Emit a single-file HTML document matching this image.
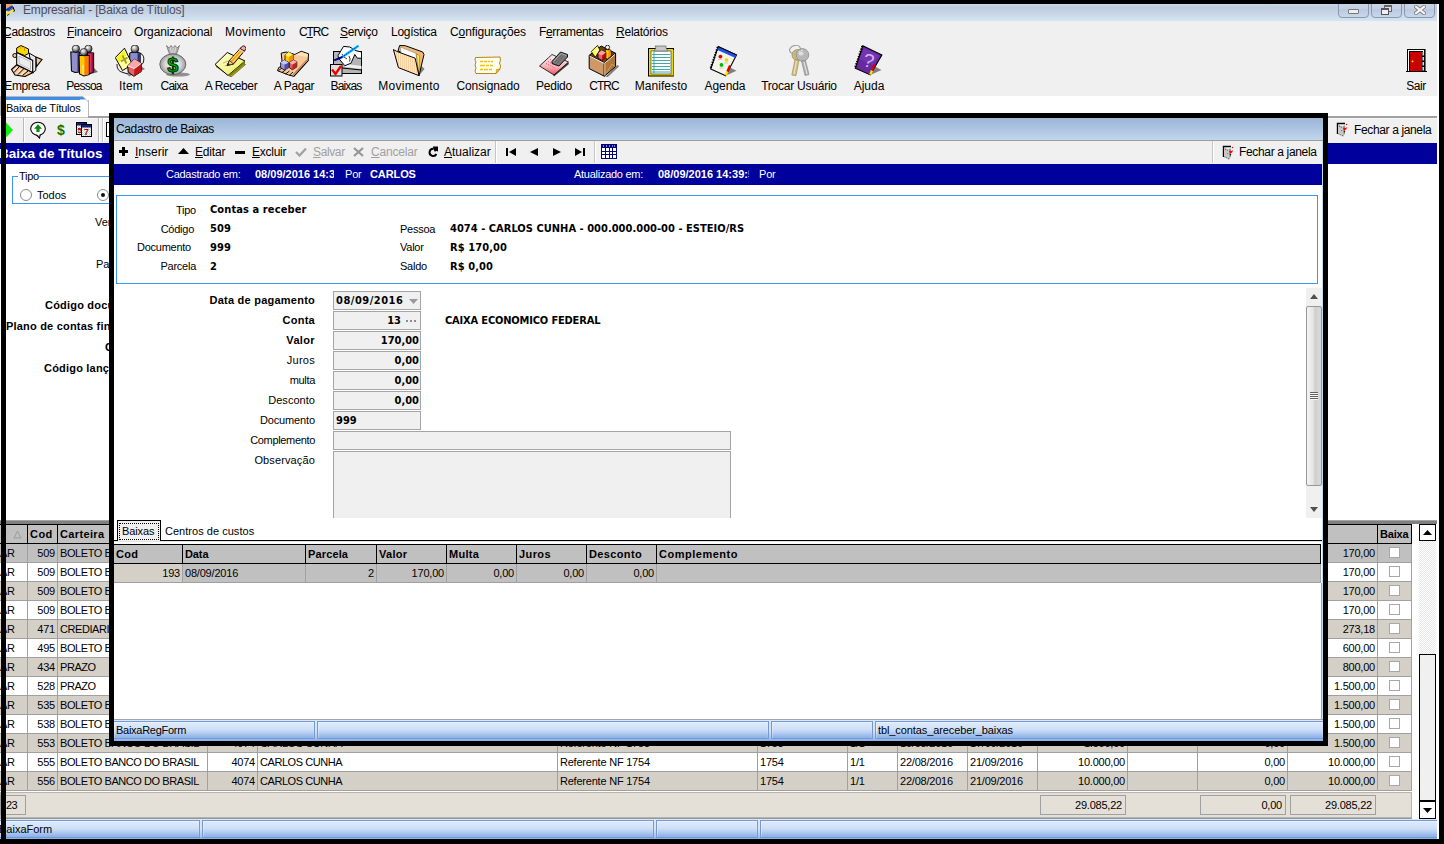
<!DOCTYPE html>
<html lang="pt-BR"><head><meta charset="utf-8"><title>Empresarial - [Baixa de Títulos]</title>
<style>
html,body{margin:0;padding:0;}
body{width:1444px;height:844px;overflow:hidden;background:#000;position:relative;font-family:"Liberation Sans",sans-serif;font-size:11px;color:#000;}
div,span{box-sizing:border-box;}
.a{position:absolute;}
.t{position:absolute;white-space:nowrap;line-height:14px;}
.seg{font-family:"Liberation Sans",sans-serif;font-size:12px;}
.b{font-weight:bold;}
.r{text-align:right;}
u{text-decoration:underline;text-underline-offset:1px;}
#main{position:absolute;left:0;top:0;width:1444px;height:844px;background:#fff;overflow:hidden;}
.blk{position:absolute;background:#000;}
#title{left:0;top:4px;width:1437px;height:17px;background:linear-gradient(#cad7e6 0,#bdccdd 18%,#c4d2e3 45%,#d7e4f2 100%);}
#menubar{left:0;top:21px;width:1437px;height:21px;background:#f0f0f0;}
#toolbar{left:0;top:42px;width:1437px;height:54px;background:#f0f0f0;}
.wb{position:absolute;top:0px;height:18px;border:1px solid #8b97b5;border-radius:0 0 4px 4px;background:linear-gradient(#ccd9e9,#c2d0e3 50%,#b9c9de 50%,#c9d7e9);}
.bluebar{background:#00009c;}
.grow{position:absolute;left:0;height:19px;width:1406px;}
.gc{position:absolute;top:0;height:19px;border-right:1px solid #a0a0a0;border-bottom:1px solid #a0a0a0;line-height:18px;white-space:nowrap;overflow:hidden;font-size:11px;}
.gh{position:absolute;top:0;height:19px;border:1px solid #000;border-left:none;background:#c0c0c0;line-height:18px;font-weight:bold;font-size:11px;white-space:nowrap;overflow:hidden;padding-left:2px;}
.sb{position:absolute;height:20px;background:linear-gradient(#d9e7fb 0,#d4e3fa 50%,#a9c6f0 85%,#86afe9 100%);}
.sbs{position:absolute;height:18px;border:1px solid #7499d3;background:linear-gradient(#dfebfc 0,#cfe0f8 45%,#bdd3f4 62%,#9dbcec 85%,#8db1e7 100%);box-shadow:inset 1px 1px 0 rgba(255,255,255,.3),inset -1px 0 0 rgba(255,255,255,.12);}
.fbox{position:absolute;height:20px;border:1px solid #a0a0a0;background:#e4e0d8;line-height:18px;text-align:right;padding-right:3px;font-size:11px;}
.fld{position:absolute;height:19px;border:1px solid #a5a5a5;background:#f0f0f0;font-family:"DejaVu Sans Condensed","DejaVu Sans","Liberation Sans",sans-serif;font-weight:bold;font-size:11px;line-height:17px;white-space:nowrap;}
.lbl{position:absolute;white-space:nowrap;font-size:11px;line-height:14px;text-align:right;}
.vb{font-family:"DejaVu Sans Condensed","DejaVu Sans","Liberation Sans",sans-serif;font-weight:bold;font-size:11px;}

#ttl{letter-spacing:-0.178px !important}
#mn1{letter-spacing:-0.135px !important}
#mn2{letter-spacing:-0.125px !important}
#mn3{letter-spacing:0.224px !important}
#mn4{letter-spacing:-1.09px !important}
#mn5{letter-spacing:-0.362px !important}
#mn6{letter-spacing:-0.259px !important}
#mn7{letter-spacing:-0.108px !important}
#mn8{letter-spacing:-0.342px !important}
#mn9{letter-spacing:-0.233px !important}
#tl1{letter-spacing:-0.755px !important}
#tl2{letter-spacing:0.114px !important}
#tl3{letter-spacing:-0.738px !important}
#tl4{letter-spacing:-0.394px !important}
#tl5{letter-spacing:-0.315px !important}
#tl6{letter-spacing:-0.839px !important}
#tl7{letter-spacing:0.335px !important}
#tl8{letter-spacing:-0.086px !important}
#tl9{letter-spacing:-0.196px !important}
#tl10{letter-spacing:-1.007px !important}
#tl11{letter-spacing:0.052px !important}
#tl12{letter-spacing:-0.096px !important}
#tl13{letter-spacing:-0.237px !important}
#tl14{letter-spacing:-0.001px !important}
#tl15{letter-spacing:-0.461px !important}
#fj1{letter-spacing:-0.361px !important}
#fj2{letter-spacing:-0.341px !important}
#dh0{letter-spacing:0.27px !important}
#dh1{letter-spacing:-0.111px !important}
#dh2{letter-spacing:0.135px !important}
#dh3{letter-spacing:0.299px !important}
#dh4{letter-spacing:0.273px !important}
#dh5{letter-spacing:0.406px !important}
#dh6{letter-spacing:0.359px !important}
#dh7{letter-spacing:0.514px !important}
#gh1{letter-spacing:0.436px !important}
#gh2{letter-spacing:0.365px !important}
#gh14{letter-spacing:-0.172px !important}
#db0{letter-spacing:-0.008px !important}
#db1{letter-spacing:-0.177px !important}
#db2{letter-spacing:-0.262px !important}
#db3{letter-spacing:-0.372px !important}
#db4{letter-spacing:-0.191px !important}
#db5{letter-spacing:0.011px !important}
#dttl{letter-spacing:-0.374px !important}
#fl0{letter-spacing:0.237px !important}
#fl1{letter-spacing:0.266px !important}
#fl2{letter-spacing:0.359px !important}
#fl3{letter-spacing:0.259px !important}
#fl4{letter-spacing:-0.321px !important}
#fl5{letter-spacing:0.039px !important}
#fl6{letter-spacing:-0.13px !important}
#fl7{letter-spacing:-0.335px !important}
#fl8{letter-spacing:0.129px !important}
#mn0{letter-spacing:-0.3px !important}
#tl0{letter-spacing:-0.376px !important}

</style></head>
<body>
<div id="main">
<div class="a" id="title"></div>
<svg class="a" style="left:0px;top:3px" width="16" height="14" viewBox="0 0 16 14"><path d="M0 7 L3 5.500 L3 9Z" fill="#e8e000"/><path d="M6 1 L12 1 L13 3 L8 6 L6 5Z" fill="#f0a868"/><path d="M6 6 L12 2.500 L13.300 4 L8.500 8 L6 7.500Z" fill="#0838e0"/><path d="M8.500 8 L13.300 4.500 L13.800 5.500 L9 9Z" fill="#804010"/><path d="M6 8 L8 9 L13 6 L14.300 8 L9 11.500 L7 12.500 L6 11.500Z" fill="#f0e850"/><path d="M13 4 L14.500 8 L13.500 8.500" fill="none" stroke="#000" stroke-width="1"/><path d="M7 12.500 L9.500 11" stroke="#000" stroke-width=".8"/></svg>
<div class="t seg" style="left:23px;top:2px;font-size:12px;color:#4e4e5e;line-height:16px" id="ttl">Empresarial - [Baixa de Títulos]</div>
<div class="wb" style="left:1338px;width:31px"><div class="a" style="left:9px;top:8px;width:11px;height:5px;border:1px solid #777;border-radius:1px;background:#eee"></div></div>
<div class="wb" style="left:1371px;width:31px"><div class="a" style="left:12px;top:4px;width:8px;height:7px;border:1px solid #666;border-top-width:2px;background:#dde"></div><div class="a" style="left:9px;top:7px;width:8px;height:7px;border:1px solid #555;border-top-width:2px;background:#eef"></div></div>
<div class="wb" style="left:1404px;width:31px"><svg class="a" style="left:9px;top:4px" width="12" height="10" viewBox="0 0 12 10"><path d="M2 1.800 L10 8.200 M10 1.800 L2 8.200" stroke="#777" stroke-width="3.800" stroke-linecap="square"/><path d="M2 1.800 L10 8.200 M10 1.800 L2 8.200" stroke="#f4f4f4" stroke-width="2.200" stroke-linecap="square"/></svg></div>
<div class="a" id="menubar"></div>
<div class="t seg mn" id="mn0" style="left:3px;top:24px;line-height:16px"><u>C</u>adastros</div>
<div class="t seg mn" id="mn1" style="left:67px;top:24px;line-height:16px"><u>F</u>inanceiro</div>
<div class="t seg mn" id="mn2" style="left:134px;top:24px;line-height:16px">Organizacional</div>
<div class="t seg mn" id="mn3" style="left:225px;top:24px;line-height:16px">Movimento</div>
<div class="t seg mn" id="mn4" style="left:299px;top:24px;line-height:16px">C<u>T</u>RC</div>
<div class="t seg mn" id="mn5" style="left:340px;top:24px;line-height:16px"><u>S</u>erviço</div>
<div class="t seg mn" id="mn6" style="left:391px;top:24px;line-height:16px">Logística</div>
<div class="t seg mn" id="mn7" style="left:450px;top:24px;line-height:16px">C<u>o</u>nfigurações</div>
<div class="t seg mn" id="mn8" style="left:539px;top:24px;line-height:16px">F<u>e</u>rramentas</div>
<div class="t seg mn" id="mn9" style="left:616px;top:24px;line-height:16px"><u>R</u>elatórios</div>
<div class="a" id="toolbar"></div>
<svg class="a" style="left:11px;top:45px" width="32" height="32" viewBox="0 0 32 32">
<path d="M0.500 24.500 L5.500 20 L22 27.500 L14 31.500 L4 30Z" fill="#f8c898" stroke="#000" stroke-width="1.1"/>
<path d="M3 27.500 L8 22 M7 29.500 L12.500 24 M11.500 30.500 L17 26" stroke="#000" stroke-width="1"/>
<path d="M2.500 26 L6.500 22 M6 28.500 L10.500 24 M10 30 L15 25.500" stroke="#fff" stroke-width=".8"/>
<path d="M24.800 12 L31 14.500 L25.500 21.500Z" fill="#f8c898" stroke="#000" stroke-width="1.1"/>
<circle cx="3.800" cy="10.500" r="2" fill="#f8c898" stroke="#000"/>
<path d="M18 8 L24.800 12 L24.800 25.500 L21.700 27.500Z" fill="#e8e8e8" stroke="#000" stroke-width="1"/>
<path d="M5.700 3 L9.900 0.500 L17.500 4 L17.500 8.500 L13.700 10.500 L5.700 7.500Z" fill="#ffd800" stroke="#000" stroke-width="1"/>
<path d="M9.900 0.500 L9.900 4 M13.500 2.200 L13.500 6" stroke="#c09000" stroke-width=".8"/>
<path d="M5.700 7.400 L21.700 15.400 L21.700 27.500 L5.700 19.500Z" fill="#fff" stroke="#000" stroke-width="1.1"/>
<path d="M8 11 L19.500 16.500 L19.500 24.500 L8 18.500Z" fill="#ececec" stroke="#aaa" stroke-width=".8"/>
</svg>
<div class="t seg tl" id="tl0" style="left:-33px;width:120px;text-align:center;top:78px;line-height:16px">Empresa</div>
<svg class="a" style="left:70px;top:45px" width="32" height="32" viewBox="0 0 32 32">
<defs><radialGradient id="hd" cx=".38" cy=".32" r=".7"><stop offset="0" stop-color="#fff"/><stop offset=".45" stop-color="#aaa"/><stop offset="1" stop-color="#222"/></radialGradient></defs>
<path d="M14 31 L28 27 L24 23 L16 26Z" fill="#707070"/>
<path d="M0.800 7 L9.500 7 L9.500 27 L5 27.500 L1.500 26Z" fill="#9090d0" stroke="#000" stroke-width="1.1"/>
<path d="M7.500 8 L9.500 8 L9.500 27 L7.500 27Z" fill="#303070"/>
<path d="M17.500 7.500 L23.600 8 L23.600 27 L19 29 L17.500 28Z" fill="#d83070" stroke="#000" stroke-width="1.1"/>
<path d="M21.500 8.500 L23.300 8.500 L23.300 27 L21.500 28Z" fill="#901040"/>
<path d="M9 10.500 L19 10.500 L19 29.500 L14 31 L9.500 29Z" fill="#ffc800" stroke="#000" stroke-width="1.1"/>
<path d="M14.500 11 L18.600 11 L18.600 29.500 L14.500 30.500Z" fill="#ff7800"/>
<path d="M13 20 L13 30" stroke="#fff" stroke-width=".7"/>
<circle cx="5.900" cy="3.800" r="3.700" fill="url(#hd)" stroke="#000" stroke-width=".6"/>
<circle cx="18.400" cy="3.800" r="3.700" fill="url(#hd)" stroke="#000" stroke-width=".6"/>
<circle cx="13.800" cy="7.200" r="3.700" fill="url(#hd)" stroke="#000" stroke-width=".6"/>
</svg>
<div class="t seg tl" id="tl1" style="left:24px;width:120px;text-align:center;top:78px;line-height:16px">Pessoa</div>
<svg class="a" style="left:115px;top:45px" width="32" height="32" viewBox="0 0 32 32">
<defs><radialGradient id="hd2" cx=".38" cy=".32" r=".7"><stop offset="0" stop-color="#fff"/><stop offset=".45" stop-color="#aaa"/><stop offset="1" stop-color="#222"/></radialGradient></defs>
<path d="M14 31.500 L30 24 L26 21 L12 28Z" fill="#808080"/>
<path d="M14.700 8 Q20 5.500 25.200 8 L25.200 18 L14.700 18Z" fill="#8c8cd0" stroke="#000" stroke-width="1"/>
<path d="M22.500 8 L25 8.500 L25 18 L22.500 18Z" fill="#303078"/>
<circle cx="19.900" cy="3.900" r="3.900" fill="url(#hd2)" stroke="#000" stroke-width=".6"/>
<path d="M25 8 Q30 10 28.500 17 Q28 19 26 19.500" fill="none" stroke="#000" stroke-width=".9"/>
<path d="M0.300 12.600 L9.500 3.200 L17.300 19.300 L7.500 25.600 Z" fill="#ffffa0" stroke="#000" stroke-width="1"/>
<path d="M1.500 13 L9 5 L11 10 L4 18Z" fill="#f0f000" opacity=".8"/>
<path d="M7.500 10.500 l4 8 M6 16.500 l6.500 -4" stroke="#a09828" stroke-width="1.700"/>
<path d="M2 19 Q1.500 26 8 27.500 L13 29" fill="none" stroke="#000" stroke-width=".9"/>
<path d="M12.700 20.900 L19.400 14.100 L26.200 18.300 L26.200 26.600 L18.900 31.300 L13.200 27.100Z" fill="#e86060" stroke="#000" stroke-width="1"/>
<path d="M12.700 20.900 L19.400 14.100 L26.200 18.300 L19.500 23.500Z" fill="#f8a8a8"/>
<path d="M19.500 23.500 L26.200 18.300 L26.200 26.600 L18.900 31.300Z" fill="#c01818"/>
<path d="M13 21 L19.500 23.500 L26 18.500" fill="none" stroke="#fff" stroke-width=".9"/>
</svg>
<div class="t seg tl" id="tl2" style="left:71px;width:120px;text-align:center;top:78px;line-height:16px">Item</div>
<svg class="a" style="left:159px;top:45px" width="32" height="32" viewBox="0 0 32 32">
<defs><radialGradient id="bg1" cx=".5" cy=".5" r=".55"><stop offset="0" stop-color="#fff"/><stop offset=".55" stop-color="#d8d8d8"/><stop offset="1" stop-color="#8c8c8c"/></radialGradient></defs>
<ellipse cx="19" cy="29.500" rx="12" ry="2" fill="#909090"/>
<path d="M7.500 0.500 L10 3 L12 0.500 L14 3 L16 0.500 L18 3 L20.500 0.500 L17.500 9 L10.500 9Z" fill="#b0b0b0" stroke="#707070" stroke-width=".8"/>
<path d="M11 2 L12.500 8 M14 2 L14 8 M17 2 L15.500 8" stroke="#e8e8e8" stroke-width=".8"/>
<ellipse cx="13.800" cy="19.300" rx="13" ry="10.400" fill="url(#bg1)" stroke="#606060" stroke-width=".9"/>
<text x="13.800" y="26.500" font-family="Liberation Sans,sans-serif" font-weight="bold" font-size="20" fill="#00b000" stroke="#003000" stroke-width="1" text-anchor="middle">$</text>
</svg>
<div class="t seg tl" id="tl3" style="left:114px;width:120px;text-align:center;top:78px;line-height:16px">Caixa</div>
<svg class="a" style="left:214px;top:45px" width="32" height="32" viewBox="0 0 32 32">
<defs><linearGradient id="pp" x1="0" y1="0" x2="1" y2="1"><stop offset="0" stop-color="#ffffd8"/><stop offset=".6" stop-color="#f4f490"/><stop offset="1" stop-color="#e0e020"/></linearGradient></defs>
<path d="M2 21.500 L14 12 L31.500 19.500 L17 32Z" fill="#b8b830" stroke="#606000" stroke-width=".8"/>
<path d="M1 19.500 L13.300 7.500 L31 16 L14 30.500Z" fill="url(#pp)" stroke="#000" stroke-width="1"/>
<path d="M14 30.500 L31 16 L31 19 L16 31.500Z" fill="#808010"/>
<path d="M9 18 l8 -3 M11 21 l9 -4" stroke="#a0a050" stroke-width=".7"/>
<path d="M13 20.500 L15.500 15.500 L27 2.500 L30.800 5.500 L19.500 19 Z" fill="#ff9c20" stroke="#000" stroke-width=".9"/>
<path d="M16.500 15.500 L27.500 3.500 M18.500 17.500 L29.500 5" stroke="#ffe860" stroke-width="1.100"/>
<path d="M26 3.500 L29 0.800 Q31.500 0.500 32 3.500 L30.500 6Z" fill="#f8a8a8" stroke="#000" stroke-width=".8"/>
<path d="M25.500 4.500 L30 7.500" stroke="#d0d0d0" stroke-width="1.500"/>
<path d="M13 20.500 L15.500 15.500 L19.500 19Z" fill="#f0c8a0" stroke="#000" stroke-width=".6"/>
<path d="M13 20.500 L14.200 18 L16 19.600Z" fill="#202020"/>
</svg>
<div class="t seg tl" id="tl4" style="left:171px;width:120px;text-align:center;top:78px;line-height:16px">A Receber</div>
<svg class="a" style="left:277px;top:45px" width="32" height="32" viewBox="0 0 32 32">
<path d="M17 32 L31.500 16 L31.500 13 L16 30Z" fill="#000"/>
<path d="M4.200 8.200 L9.200 7 L17.900 9.500 L24.200 6.300 L31.600 8.800 L31 15.700 L16.700 31.300 L11.700 30 L0.500 25.700 L1.700 22.600 L5.500 20.700 Z" fill="#f8c898" stroke="#000" stroke-width="1"/>
<path d="M18 10 L24.200 7 L31 9.200 L30.500 12 Z" fill="#fde0c0"/>
<path d="M1.500 25.500 L5 23 M5 27.500 L9 24.500 M8.500 29 L12.500 26 M12.500 30.200 L16 27" stroke="#000" stroke-width=".9"/>
<path d="M16 30 L30 15" stroke="#c08850" stroke-width="1.500"/>
<path d="M8 10.100 L11.700 7 L16.100 9.500 L16.100 15.700 L11.700 17.600 L8 15.700Z" fill="#ffc800" stroke="#000" stroke-width=".8"/>
<path d="M8 10.100 L11.700 7 L16.100 9.500 L12 12Z" fill="#fff060"/><path d="M12 12 L16.100 9.500 L16.100 15.700 L11.700 17.600Z" fill="#f09000"/>
<path d="M3.600 17.600 L7.300 15.100 L11.700 17.600 L11.700 22.600 L7.300 25 L3.600 22.600Z" fill="#9898e8" stroke="#000" stroke-width=".8"/>
<path d="M7.500 19.500 L11.700 17.600 L11.700 22.600 L7.300 25Z" fill="#5050a0"/><path d="M3.600 17.600 L7.300 15.100 L11.700 17.600 L7.500 19.500Z" fill="#c8c8ff"/>
<path d="M12.300 17.600 L16.700 15.100 L19.800 16.900 L19.800 21.900 L15.400 24.700 L12.300 22.600Z" fill="#e06060" stroke="#000" stroke-width=".8"/>
<path d="M15.500 19.500 L19.800 16.900 L19.800 21.900 L15.400 24.700Z" fill="#b02828"/><path d="M12.300 17.600 L16.700 15.100 L19.800 16.900 L15.500 19.500Z" fill="#f8b0b0"/>
</svg>
<div class="t seg tl" id="tl5" style="left:234px;width:120px;text-align:center;top:78px;line-height:16px">A Pagar</div>
<svg class="a" style="left:330px;top:45px" width="32" height="32" viewBox="0 0 32 32">
<rect x="3.500" y="6.500" width="28" height="22" fill="#b4b4b4" stroke="#000" stroke-width="1"/>
<path d="M14.800 18.800 L31.500 21 L31.500 24 L14.800 22Z" fill="#f0f0f0"/>
<path d="M12 23 L31.500 25" stroke="#000" stroke-width="1.200"/>
<path d="M8 10.700 L13.500 1.400 L19.800 2 L26 5.700 L31.600 7 L31.600 13.200 L27.300 13.200 L24.800 9.500 L21 18.200 L14.800 20.700 L8.600 13.200Z" fill="#fff" stroke="#000" stroke-width="1"/>
<path d="M12 9 Q14 13 17 14 M19 11 Q21 14 19.500 16.500" fill="none" stroke="#000" stroke-width=".8"/>
<path d="M12 12.200 L28.500 0.700" stroke="#00c8ff" stroke-width="2.400"/>
<path d="M12 12.200 L28.500 0.700" stroke="#0020e0" stroke-width="1" stroke-dasharray="1.500 1"/>
<path d="M4.200 15.400 L12.300 12" stroke="#000090" stroke-width="2"/>
<rect x="0.500" y="19.500" width="11.500" height="11.500" fill="#e0e0e0" stroke="#000" stroke-width="1"/>
<path d="M2 24.500 L5.500 29 L11 21" fill="none" stroke="#f00000" stroke-width="2.400"/>
</svg>
<div class="t seg tl" id="tl6" style="left:286px;width:120px;text-align:center;top:78px;line-height:16px">Baixas</div>
<svg class="a" style="left:393px;top:45px" width="32" height="32" viewBox="0 0 32 32">
<defs><pattern id="st" width="2" height="2" patternUnits="userSpaceOnUse"><rect width="2" height="2" fill="#f8d0a0"/><rect width="1" height="2" fill="#fff0a0"/></pattern></defs>
<path d="M26 30.700 L31.600 23.800 L28.500 21.300 L24 27Z" fill="#808080"/>
<path d="M6.600 0.500 L12.300 0.700 L29.700 7 L31 9.500 L26 30.700 L22 13 L5 6Z" fill="#f0b878" stroke="#000" stroke-width="1"/>
<path d="M7.300 2 L22.900 8.200 L25.300 25.700 L9 18Z" fill="#fff" stroke="#808080" stroke-width=".6"/>
<path d="M23.500 8.800 L26.600 10.700 L26 28.200 L24.500 20Z" fill="#ffe860" stroke="#806000" stroke-width=".5"/>
<path d="M0.400 4.500 L3.500 6.300 L22.200 13.200 L26 30.700 L5.400 22.600Z" fill="url(#st)" stroke="#000" stroke-width="1"/>
</svg>
<div class="t seg tl" id="tl7" style="left:349px;width:120px;text-align:center;top:78px;line-height:16px">Movimento</div>
<svg class="a" style="left:472px;top:45px" width="32" height="32" viewBox="0 0 32 32">
<path d="M3.500 12.500 L28 12 L28.500 15 L27.500 18 L28.500 21 L28 24 L24 28.500 L4 28.500 L3 26 L4 23 L3 20 L4 17 L3 15Z" fill="#fffff0" stroke="#b07800" stroke-width=".9"/>
<path d="M24 28.500 L24.500 24.500 L28 24Z" fill="#f8c800" stroke="#b07800" stroke-width=".6"/>
<path d="M8 16.500h3M12 16.500h3M16 16.500h2M19 16.500h2M8 20.500h5M14 20.500h3M18 20.500h3M8 24.500h3M12 24.500h4M17 24.500h3" stroke="#f0c000" stroke-width="1.700"/>
</svg>
<div class="t seg tl" id="tl8" style="left:428px;width:120px;text-align:center;top:78px;line-height:16px">Consignado</div>
<svg class="a" style="left:538px;top:45px" width="32" height="32" viewBox="0 0 32 32">
<defs><linearGradient id="pk" x1="0" y1="0" x2="0" y2="1"><stop offset="0" stop-color="#fff0f0"/><stop offset=".6" stop-color="#f8b0b8"/><stop offset="1" stop-color="#e85060"/></linearGradient></defs>
<path d="M16 31.500 L31 19 L30 17 L15 29Z" fill="#404040"/>
<path d="M1.500 21 L14 9.500 L30.500 17 L16 30Z" fill="url(#pk)" stroke="#000" stroke-width=".8"/>
<path d="M8 18.500 l9 4.500 M10 16.500 l9 4.500 M12 14.500 l9 4.500" stroke="#b04050" stroke-width=".8" stroke-dasharray="1 1.400"/>
<path d="M14 16.500 L22.500 7 L29.500 9.500 L29.500 12 L21 21 L14 18.500Z" fill="#787878" stroke="#000" stroke-width=".9"/>
<path d="M15.500 16.500 L23 8.500 L28.500 10.500" fill="none" stroke="#b8b8b8" stroke-width=".8"/>
<path d="M17 17l7-7.500M19 18l7-7.500" stroke="#505050" stroke-width=".7" stroke-dasharray="1 .8"/>
</svg>
<div class="t seg tl" id="tl9" style="left:494px;width:120px;text-align:center;top:78px;line-height:16px">Pedido</div>
<svg class="a" style="left:588px;top:45px" width="32" height="32" viewBox="0 0 32 32">
<path d="M17.200 31.700 L29.400 20 L31.200 21.300 L19.900 32Z" fill="#808080"/>
<path d="M1.200 10.300 L13.200 1 L27.600 8.300 L16.300 17.900Z" fill="#704010" stroke="#000" stroke-width="1"/>
<path d="M3.300 6.500 L9.600 0.400 L11.800 5.100 L7.300 12.300Z" fill="#ffff40" stroke="#000" stroke-width=".8"/>
<path d="M6.500 6 L9.500 3 L10.500 5.500 L8 9Z" fill="#ffffc0"/>
<path d="M17.200 4.400 L22.600 4.900 L23.100 10.500 L19 14.600 L17.500 12.300Z" fill="#ffc800" stroke="#000" stroke-width=".8"/>
<path d="M20.500 5 L22.500 5.200 L23 10.300 L20.500 13Z" fill="#ff9000"/>
<circle cx="19.500" cy="2.300" r="2.100" fill="#f4f4e8" stroke="#000" stroke-width=".8"/>
<path d="M10 8.500 L13.600 5.300 L17.900 7.600 L17.900 12.300 L14.100 15.500 L10 13.200Z" fill="#e86068" stroke="#000" stroke-width=".8"/>
<path d="M10 8.500 L13.600 5.300 L17.900 7.600 L14.200 10.500Z" fill="#ffa0a8"/><path d="M14.200 10.500 L17.900 7.600 L17.900 12.300 L14.100 15.500Z" fill="#c00008"/>
<path d="M1.200 10.300 L16.300 17.900 L16.300 31.200 L1.200 23.600Z" fill="#d09868" stroke="#000" stroke-width="1"/>
<path d="M16.300 17.900 L27.600 8.300 L27.600 21.500 L16.300 31.200Z" fill="#b07838" stroke="#000" stroke-width="1"/>
<path d="M1.700 11 L16.300 18.400 L27 9.300" fill="none" stroke="#fff" stroke-width=".9"/>
<path d="M16.800 18.500 V30.500" stroke="#ffd8a0" stroke-width="1"/>
<path d="M18.500 28 L24 19 L26.500 21" fill="none" stroke="#d8a060" stroke-width=".9"/>
</svg>
<div class="t seg tl" id="tl10" style="left:544px;width:120px;text-align:center;top:78px;line-height:16px">CTRC</div>
<svg class="a" style="left:645px;top:45px" width="32" height="32" viewBox="0 0 32 32">
<rect x="3.500" y="3.500" width="25" height="27.500" fill="#e8dc00" stroke="#000" stroke-width="1"/>
<path d="M4 31 L28.500 31 L28.500 5" fill="none" stroke="#807000" stroke-width="1"/>
<rect x="6" y="6" width="20" height="23" fill="#fff" stroke="#404040" stroke-width=".7"/>
<path d="M10 1 L21 1 L21 3 L23 6 L9 6 L11 3Z" fill="#c8c8c8" stroke="#606060" stroke-width=".7"/>
<path d="M7 9.500h18M7 12.500h18M7 15.500h18M7 18.500h18M7 21.500h18M7 24.500h18M7 27h18" stroke="#28a0a0" stroke-width=".9"/>
<path d="M9 6.500 V28.500" stroke="#28a0a0" stroke-width=".9"/>
</svg>
<div class="t seg tl" id="tl11" style="left:601px;width:120px;text-align:center;top:78px;line-height:16px">Manifesto</div>
<svg class="a" style="left:709px;top:45px" width="32" height="32" viewBox="0 0 32 32">
<path d="M16.700 30.700 L27.500 25.700 L21 22.400Z" fill="#808080"/>
<path d="M9.200 1.600 L27.500 9.900 L16.700 30.700 L1.700 24Z" fill="#f4f4e8" stroke="#000" stroke-width="1.100"/>
<path d="M9.200 1.600 L27.500 9.900 L26 12.800 L7.900 4.800Z" fill="#2050e8"/>
<path d="M9.200 1.600 L27.500 9.900" stroke="#000" stroke-width="1"/>
<circle cx="11.400" cy="11.600" r="1.900" fill="#e80000"/><circle cx="17.500" cy="14.900" r="1.900" fill="#f0d800"/><circle cx="12.500" cy="19.900" r="1.900" fill="#00b800"/>
<path d="M9 14.500h4M15 18h4M10.500 23h4" stroke="#c0c0b0" stroke-width=".7"/>
<path d="M21 20.500 L18.400 26.500" stroke="#e00000" stroke-width="2.200"/><path d="M18.400 26.500 L16.700 30.400" stroke="#ffe000" stroke-width="2.400"/>
<path d="M8.800 2 L1.600 23.500" stroke="#000" stroke-width="2.200" stroke-dasharray="1.300 1.300"/>
</svg>
<div class="t seg tl" id="tl12" style="left:665px;width:120px;text-align:center;top:78px;line-height:16px">Agenda</div>
<svg class="a" style="left:783px;top:45px" width="32" height="32" viewBox="0 0 32 32">
<ellipse cx="12" cy="4.500" rx="5.500" ry="4" fill="none" stroke="#a0a0a0" stroke-width="1.200" transform="rotate(-15 12 4.500)"/>
<circle cx="14.500" cy="10" r="5.500" fill="#c8b880" stroke="#988850" stroke-width=".7"/>
<path d="M12 14.500 L16 15.500 L13 30.700 L8.800 30Z" fill="#d0c088" stroke="#988850" stroke-width=".6"/>
<path d="M13.500 16 L11 29" stroke="#f0e8c0" stroke-width="1"/>
<circle cx="19.500" cy="9.900" r="6.300" fill="#b8b8b8" stroke="#888" stroke-width=".7"/>
<circle cx="18" cy="8" r="2.500" fill="#e0e0e0"/>
<path d="M18.500 16 L22.500 15.500 L26 29.500 L22 30.500Z" fill="#b0b0b0" stroke="#808080" stroke-width=".6"/>
<path d="M21 17 L24 29" stroke="#e8e8e8" stroke-width="1"/>
<circle cx="19" cy="5.500" r="1.300" fill="#f0f0f0" stroke="#888" stroke-width=".5"/>
</svg>
<div class="t seg tl" id="tl13" style="left:739px;width:120px;text-align:center;top:78px;line-height:16px">Trocar Usuário</div>
<svg class="a" style="left:853px;top:45px" width="32" height="32" viewBox="0 0 32 32">
<path d="M17.300 30 L28.500 25 L22 21.500Z" fill="#808080"/>
<path d="M9.800 0.800 L28.900 9.900 L17.300 29.900 L2.300 23.200Z" fill="#6828a0" stroke="#000" stroke-width="1.100"/>
<path d="M11 3 L26 10.200 L20 20 L6 14Z" fill="#7c38b8" opacity=".7"/>
<path d="M21.800 19.500 L19 25.500" stroke="#e00000" stroke-width="2.200"/><path d="M19 25.500 L17.300 29.600" stroke="#ffe000" stroke-width="2.400"/>
<path d="M9.400 1.200 L2.100 22.800" stroke="#000" stroke-width="2.200" stroke-dasharray="1.300 1.300"/>
<text x="15.500" y="22" font-family="Liberation Sans,sans-serif" font-size="19" fill="#d0b8f0" text-anchor="middle" transform="rotate(14 15 16)">?</text>
</svg>
<div class="t seg tl" id="tl14" style="left:809px;width:120px;text-align:center;top:78px;line-height:16px">Ajuda</div>
<svg class="a" style="left:1400px;top:45px" width="32" height="32" viewBox="0 0 32 32">
<rect x="7.500" y="4.500" width="17.500" height="22" fill="#fff" stroke="#000" stroke-width="1"/>
<rect x="9.500" y="6.500" width="13" height="20" fill="#c80000" stroke="#000" stroke-width="1"/>
<path d="M23.300 7 V26" stroke="#000" stroke-width="1.600"/>
<path d="M23.200 7 V26" stroke="#fff" stroke-width="1.300" stroke-dasharray="3.500 1.500"/>
<path d="M24.600 4 V26.500" stroke="#000" stroke-width="1"/>
<path d="M6 26.500 H27" stroke="#000" stroke-width="1"/>
<rect x="11.700" y="15.600" width="1.600" height="1.600" fill="#ff0"/>
</svg>
<div class="t seg tl" id="tl15" style="left:1356px;width:120px;text-align:center;top:78px;line-height:16px">Sair</div>
<div class="a" style="left:0;top:96px;width:1437px;height:22px;background:#fff"></div>
<div class="a" style="left:0;top:96px;width:89px;height:22px;border:1px solid #b8b8b8;border-bottom:none;border-radius:0 5px 0 0;background:#fff;overflow:hidden"><div class="a" style="left:0;top:0;width:83px;height:3px;background:#3c8ee8"></div></div>
<div class="a" style="left:80px;top:96px;width:9px;height:4px;background:#fff"></div>
<svg class="a" style="left:78px;top:95px" width="12" height="8" viewBox="0 0 12 8"><path d="M0 1.5 L5 1.5 L10.5 7" fill="none" stroke="#b8b8b8"/><path d="M0 2 L5 2 L7.5 4.5 L0 4.5Z" fill="#3c8ee8"/></svg>
<div class="t" style="left:6px;top:101px;font-size:11px;color:#000;letter-spacing:-0.27px" id="tabt">Baixa de Títulos</div>
<div class="a" style="left:0;top:116px;width:1437px;height:27px;background:#f0f0f0;border-top:2px solid #a0a0a0;box-shadow:inset 0 1px 0 #f7f7f7"></div>
<div class="a" style="left:0;top:116px;width:88px;height:1px;background:#fff"></div><div class="a" style="left:0;top:117px;width:88px;height:1px;background:#c6c6c6"></div>
<svg class="a" style="left:6px;top:122px" width="8" height="16" viewBox="0 0 8 16"><path d="M0 0.500 L7 8 L0 15.500Z" fill="#10f010"/></svg>
<div class="a" style="left:23px;top:118px;width:2px;height:24px;border-left:1px solid #b8b8b8;border-right:1px solid #fff"></div>
<svg class="a" style="left:29px;top:121px" width="18" height="18" viewBox="0 0 18 18"><path d="M6 12.500 L10.500 17 L11.500 12.500Z" fill="#fff" stroke="#000" stroke-width="1.100"/><ellipse cx="9" cy="7.700" rx="7.300" ry="6.500" fill="#fff" stroke="#000" stroke-width="1.100"/><path d="M7 12.800 L10 15 L10.800 12.800Z" fill="#fff"/><path d="M9 3.300 L13 7.800 L10.600 7.800 L10.600 11 L7.400 11 L7.400 7.800 L5 7.800Z" fill="#0a8a0a"/></svg>
<div class="t b" style="left:57px;top:122px;font-size:14px;color:#087808;line-height:16px">$</div>
<svg class="a" style="left:76px;top:122px" width="17" height="16" viewBox="0 0 17 16"><defs><pattern id="ck" width="2" height="2" patternUnits="userSpaceOnUse"><rect width="2" height="2" fill="#fff"/><rect width="1" height="1" fill="#d0d0d0"/><rect x="1" y="1" width="1" height="1" fill="#d0d0d0"/></pattern></defs><rect x=".5" y=".5" width="10" height="12" fill="url(#ck)" stroke="#000"/><rect x="1" y="1" width="9" height="2.500" fill="#102080"/><text x="1.500" y="10.500" font-size="8" font-weight="bold" fill="#900" font-family="Liberation Sans,sans-serif">5</text><rect x="5.500" y="2.500" width="10" height="12" fill="url(#ck)" stroke="#000"/><rect x="6" y="3" width="9" height="2.500" fill="#102080"/><text x="8" y="13" font-size="8.500" font-weight="bold" fill="#900" font-family="Liberation Sans,sans-serif">7</text></svg>
<div class="a" style="left:98px;top:118px;width:2px;height:24px;border-left:1px solid #b8b8b8;border-right:1px solid #fff"></div>
<div class="a" style="left:102px;top:118px;width:2px;height:24px;border-left:1px solid #c8c8c8;border-right:1px solid #fff"></div>
<div class="a" style="left:106px;top:122px;width:8px;height:15px;border:1px solid #000;background:#fff"></div>
<svg class="a" style="left:1336px;top:122px" width="12" height="15" viewBox="0 0 12 15"><path d="M1.500 12 V1.500 H9" fill="none" stroke="#000" stroke-width="1.400"/><path d="M2.200 2.800 L6.900 4.600 L7.600 14.600 L2.200 11.900Z" fill="#c8c8c8"/><path d="M6.900 4.600 L8.800 3.200 L8.800 11.300 L7.600 14.600Z" fill="#8c8c8c"/><path d="M3 4 L6 5.500 M2.500 11.800 L7 14" stroke="#202020" stroke-width=".8" stroke-dasharray="1 1"/><rect x="5" y="8" width="1.200" height="1.200" fill="#a09000"/><circle cx="8.500" cy="9.800" r=".7" fill="#000"/><path d="M7 6.500 L8.500 5.500 L9 6.300 L10.800 5 L10.500 7 L8.500 8.800 L7.800 7.500Z" fill="#ff0000"/><circle cx="10.500" cy="2.500" r=".7" fill="#ff0000"/></svg>
<div class="t seg" id="fj1" style="left:1354px;top:122px;line-height:16px">Fechar a janela</div>
<div class="a bluebar" style="left:0;top:143px;width:1437px;height:21px"></div>
<div class="t b" id="bt1" style="left:-1px;top:145px;font-size:13.5px;color:#fff;line-height:17px">Baixa de Títulos</div>
<div class="a" style="left:12px;top:176px;width:300px;height:28px;border:1px solid #3c96f0"></div>
<div class="t" style="left:18px;top:169px;font-size:11px;background:#fff;padding:0 0 0 1px;line-height:14px;letter-spacing:-0.25px">Tipo</div>
<div class="a" style="left:20px;top:189px;width:12px;height:12px;border:1px solid #8a8a8a;border-radius:50%;background:#fff"></div>
<div class="t" style="left:37px;top:188px;font-size:11px">Todos</div>
<div class="a" style="left:97px;top:189px;width:12px;height:12px;border:1px solid #8a8a8a;border-radius:50%;background:#fff"></div><div class="a" style="left:101px;top:193px;width:4px;height:4px;border-radius:50%;background:#111"></div>
<div class="t" style="left:95px;top:215px;font-size:11px">Vencimento</div>
<div class="t" style="left:96px;top:257px;font-size:11px">Pagamento</div>
<div class="t b" style="left:45px;top:298px;font-size:11px;letter-spacing:0.2px" id="ll1">Código documento</div>
<div class="t b" style="left:6px;top:319px;font-size:11px;letter-spacing:0.2px" id="ll2">Plano de contas financeiro</div>
<div class="t b" style="left:105px;top:340px;font-size:11px">Conta</div>
<div class="t b" style="left:44px;top:361px;font-size:11px;letter-spacing:0.2px" id="ll3">Código lançamento</div>
<div class="a" style="left:0;top:520px;width:1437px;height:4px;background:#808080"></div>
<div class="a" style="left:0;top:520px;width:1437px;height:1px;background:#a4a4a4"></div>
<div class="a" style="left:0;top:524px;width:1412px;height:20px;background:#c0c0c0">
<div class="gh" style="left:0;width:28px;height:20px"><svg class="a" style="left:13px;top:5px" width="9" height="9" viewBox="0 0 9 9"><path d="M4.500 1 L8 8 L1 8Z" fill="none" stroke="#9c9c9c"/></svg></div>
<div class="gh" id="gh1" style="left:28px;width:30px;height:20px">Cod</div>
<div class="gh" id="gh2" style="left:58px;width:150px;height:20px">Carteira</div>
<div class="gh" id="gh3" style="left:208px;width:50px;height:20px">Sacado</div>
<div class="gh" id="gh4" style="left:258px;width:300px;height:20px">Nome</div>
<div class="gh" id="gh5" style="left:558px;width:200px;height:20px">Histórico</div>
<div class="gh" id="gh6" style="left:758px;width:90px;height:20px">Documento</div>
<div class="gh" id="gh7" style="left:848px;width:50px;height:20px">Parc</div>
<div class="gh" id="gh8" style="left:898px;width:70px;height:20px">Emissão</div>
<div class="gh" id="gh9" style="left:968px;width:70px;height:20px">Vencimento</div>
<div class="gh" id="gh10" style="left:1038px;width:90px;height:20px">Valor</div>
<div class="gh" id="gh11" style="left:1128px;width:70px;height:20px">Pago</div>
<div class="gh" id="gh12" style="left:1198px;width:90px;height:20px">Desconto</div>
<div class="gh" id="gh13" style="left:1288px;width:90px;height:20px">Saldo</div>
<div class="gh" id="gh14" style="left:1378px;width:34px;height:20px">Baixa</div>
</div>
<div class="grow" style="top:544px;left:0;width:1412px;background:#c0c0c0">
<div class="gc" style="left:0;width:28px;padding-left:0px;letter-spacing:-0.4px">AR</div>
<div class="gc" style="left:28px;width:30px;text-align:right;padding-right:2px;letter-spacing:-0.22px">509</div>
<div class="gc" style="left:58px;width:150px;padding-left:2px;letter-spacing:-0.43px">BOLETO BANCO DO BRASIL</div>
<div class="gc" style="left:208px;width:50px;text-align:right;padding-right:2px;letter-spacing:-0.22px">4074</div>
<div class="gc" style="left:258px;width:300px;padding-left:2px;letter-spacing:-0.43px">CARLOS CUNHA</div>
<div class="gc" style="left:558px;width:200px;padding-left:2px;letter-spacing:-0.22px">Referente NF 1748</div>
<div class="gc" style="left:758px;width:90px;padding-left:2px;letter-spacing:-0.22px">1748</div>
<div class="gc" style="left:848px;width:50px;padding-left:2px;letter-spacing:-0.22px">1/4</div>
<div class="gc" style="left:898px;width:70px;padding-left:2px;letter-spacing:-0.22px">08/08/2016</div>
<div class="gc" style="left:968px;width:70px;padding-left:2px;letter-spacing:-0.22px">08/09/2016</div>
<div class="gc" style="left:1038px;width:90px;text-align:right;padding-right:2px;letter-spacing:-0.22px">170,00</div>
<div class="gc" style="left:1128px;width:70px;text-align:right;padding-right:2px;letter-spacing:-0.22px"></div>
<div class="gc" style="left:1198px;width:90px;text-align:right;padding-right:2px;letter-spacing:-0.22px">0,00</div>
<div class="gc" style="left:1288px;width:90px;text-align:right;padding-right:2px;letter-spacing:-0.22px">170,00</div>
<div class="gc" style="left:1378px;width:34px"><div class="a" style="left:11px;top:3px;width:11px;height:11px;border:1px solid #a8a8a8;background:#fff"></div></div>
</div>
<div class="grow" style="top:563px;left:0;width:1412px;background:#fff">
<div class="gc" style="left:0;width:28px;padding-left:0px;letter-spacing:-0.4px">AR</div>
<div class="gc" style="left:28px;width:30px;text-align:right;padding-right:2px;letter-spacing:-0.22px">509</div>
<div class="gc" style="left:58px;width:150px;padding-left:2px;letter-spacing:-0.43px">BOLETO BANCO DO BRASIL</div>
<div class="gc" style="left:208px;width:50px;text-align:right;padding-right:2px;letter-spacing:-0.22px">4074</div>
<div class="gc" style="left:258px;width:300px;padding-left:2px;letter-spacing:-0.43px">CARLOS CUNHA</div>
<div class="gc" style="left:558px;width:200px;padding-left:2px;letter-spacing:-0.22px">Referente NF 1748</div>
<div class="gc" style="left:758px;width:90px;padding-left:2px;letter-spacing:-0.22px">1748</div>
<div class="gc" style="left:848px;width:50px;padding-left:2px;letter-spacing:-0.22px">2/4</div>
<div class="gc" style="left:898px;width:70px;padding-left:2px;letter-spacing:-0.22px">08/08/2016</div>
<div class="gc" style="left:968px;width:70px;padding-left:2px;letter-spacing:-0.22px">08/10/2016</div>
<div class="gc" style="left:1038px;width:90px;text-align:right;padding-right:2px;letter-spacing:-0.22px">170,00</div>
<div class="gc" style="left:1128px;width:70px;text-align:right;padding-right:2px;letter-spacing:-0.22px"></div>
<div class="gc" style="left:1198px;width:90px;text-align:right;padding-right:2px;letter-spacing:-0.22px">0,00</div>
<div class="gc" style="left:1288px;width:90px;text-align:right;padding-right:2px;letter-spacing:-0.22px">170,00</div>
<div class="gc" style="left:1378px;width:34px"><div class="a" style="left:11px;top:3px;width:11px;height:11px;border:1px solid #a8a8a8;background:#fff"></div></div>
</div>
<div class="grow" style="top:582px;left:0;width:1412px;background:#d4d0c8">
<div class="gc" style="left:0;width:28px;padding-left:0px;letter-spacing:-0.4px">AR</div>
<div class="gc" style="left:28px;width:30px;text-align:right;padding-right:2px;letter-spacing:-0.22px">509</div>
<div class="gc" style="left:58px;width:150px;padding-left:2px;letter-spacing:-0.43px">BOLETO BANCO DO BRASIL</div>
<div class="gc" style="left:208px;width:50px;text-align:right;padding-right:2px;letter-spacing:-0.22px">4074</div>
<div class="gc" style="left:258px;width:300px;padding-left:2px;letter-spacing:-0.43px">CARLOS CUNHA</div>
<div class="gc" style="left:558px;width:200px;padding-left:2px;letter-spacing:-0.22px">Referente NF 1748</div>
<div class="gc" style="left:758px;width:90px;padding-left:2px;letter-spacing:-0.22px">1748</div>
<div class="gc" style="left:848px;width:50px;padding-left:2px;letter-spacing:-0.22px">3/4</div>
<div class="gc" style="left:898px;width:70px;padding-left:2px;letter-spacing:-0.22px">08/08/2016</div>
<div class="gc" style="left:968px;width:70px;padding-left:2px;letter-spacing:-0.22px">08/11/2016</div>
<div class="gc" style="left:1038px;width:90px;text-align:right;padding-right:2px;letter-spacing:-0.22px">170,00</div>
<div class="gc" style="left:1128px;width:70px;text-align:right;padding-right:2px;letter-spacing:-0.22px"></div>
<div class="gc" style="left:1198px;width:90px;text-align:right;padding-right:2px;letter-spacing:-0.22px">0,00</div>
<div class="gc" style="left:1288px;width:90px;text-align:right;padding-right:2px;letter-spacing:-0.22px">170,00</div>
<div class="gc" style="left:1378px;width:34px"><div class="a" style="left:11px;top:3px;width:11px;height:11px;border:1px solid #a8a8a8;background:#fff"></div></div>
</div>
<div class="grow" style="top:601px;left:0;width:1412px;background:#fff">
<div class="gc" style="left:0;width:28px;padding-left:0px;letter-spacing:-0.4px">AR</div>
<div class="gc" style="left:28px;width:30px;text-align:right;padding-right:2px;letter-spacing:-0.22px">509</div>
<div class="gc" style="left:58px;width:150px;padding-left:2px;letter-spacing:-0.43px">BOLETO BANCO DO BRASIL</div>
<div class="gc" style="left:208px;width:50px;text-align:right;padding-right:2px;letter-spacing:-0.22px">4074</div>
<div class="gc" style="left:258px;width:300px;padding-left:2px;letter-spacing:-0.43px">CARLOS CUNHA</div>
<div class="gc" style="left:558px;width:200px;padding-left:2px;letter-spacing:-0.22px">Referente NF 1748</div>
<div class="gc" style="left:758px;width:90px;padding-left:2px;letter-spacing:-0.22px">1748</div>
<div class="gc" style="left:848px;width:50px;padding-left:2px;letter-spacing:-0.22px">4/4</div>
<div class="gc" style="left:898px;width:70px;padding-left:2px;letter-spacing:-0.22px">08/08/2016</div>
<div class="gc" style="left:968px;width:70px;padding-left:2px;letter-spacing:-0.22px">08/12/2016</div>
<div class="gc" style="left:1038px;width:90px;text-align:right;padding-right:2px;letter-spacing:-0.22px">170,00</div>
<div class="gc" style="left:1128px;width:70px;text-align:right;padding-right:2px;letter-spacing:-0.22px"></div>
<div class="gc" style="left:1198px;width:90px;text-align:right;padding-right:2px;letter-spacing:-0.22px">0,00</div>
<div class="gc" style="left:1288px;width:90px;text-align:right;padding-right:2px;letter-spacing:-0.22px">170,00</div>
<div class="gc" style="left:1378px;width:34px"><div class="a" style="left:11px;top:3px;width:11px;height:11px;border:1px solid #a8a8a8;background:#fff"></div></div>
</div>
<div class="grow" style="top:620px;left:0;width:1412px;background:#d4d0c8">
<div class="gc" style="left:0;width:28px;padding-left:0px;letter-spacing:-0.4px">AR</div>
<div class="gc" style="left:28px;width:30px;text-align:right;padding-right:2px;letter-spacing:-0.22px">471</div>
<div class="gc" style="left:58px;width:150px;padding-left:2px;letter-spacing:-0.43px">CREDIARIO</div>
<div class="gc" style="left:208px;width:50px;text-align:right;padding-right:2px;letter-spacing:-0.22px">4074</div>
<div class="gc" style="left:258px;width:300px;padding-left:2px;letter-spacing:-0.43px">CARLOS CUNHA</div>
<div class="gc" style="left:558px;width:200px;padding-left:2px;letter-spacing:-0.22px">Referente NF 1702</div>
<div class="gc" style="left:758px;width:90px;padding-left:2px;letter-spacing:-0.22px">1702</div>
<div class="gc" style="left:848px;width:50px;padding-left:2px;letter-spacing:-0.22px">1/1</div>
<div class="gc" style="left:898px;width:70px;padding-left:2px;letter-spacing:-0.22px">12/07/2016</div>
<div class="gc" style="left:968px;width:70px;padding-left:2px;letter-spacing:-0.22px">12/08/2016</div>
<div class="gc" style="left:1038px;width:90px;text-align:right;padding-right:2px;letter-spacing:-0.22px">273,18</div>
<div class="gc" style="left:1128px;width:70px;text-align:right;padding-right:2px;letter-spacing:-0.22px"></div>
<div class="gc" style="left:1198px;width:90px;text-align:right;padding-right:2px;letter-spacing:-0.22px">0,00</div>
<div class="gc" style="left:1288px;width:90px;text-align:right;padding-right:2px;letter-spacing:-0.22px">273,18</div>
<div class="gc" style="left:1378px;width:34px"><div class="a" style="left:11px;top:3px;width:11px;height:11px;border:1px solid #a8a8a8;background:#fff"></div></div>
</div>
<div class="grow" style="top:639px;left:0;width:1412px;background:#fff">
<div class="gc" style="left:0;width:28px;padding-left:0px;letter-spacing:-0.4px">AR</div>
<div class="gc" style="left:28px;width:30px;text-align:right;padding-right:2px;letter-spacing:-0.22px">495</div>
<div class="gc" style="left:58px;width:150px;padding-left:2px;letter-spacing:-0.43px">BOLETO BANCO DO BRASIL</div>
<div class="gc" style="left:208px;width:50px;text-align:right;padding-right:2px;letter-spacing:-0.22px">4074</div>
<div class="gc" style="left:258px;width:300px;padding-left:2px;letter-spacing:-0.43px">CARLOS CUNHA</div>
<div class="gc" style="left:558px;width:200px;padding-left:2px;letter-spacing:-0.22px">Referente NF 1731</div>
<div class="gc" style="left:758px;width:90px;padding-left:2px;letter-spacing:-0.22px">1731</div>
<div class="gc" style="left:848px;width:50px;padding-left:2px;letter-spacing:-0.22px">1/1</div>
<div class="gc" style="left:898px;width:70px;padding-left:2px;letter-spacing:-0.22px">01/08/2016</div>
<div class="gc" style="left:968px;width:70px;padding-left:2px;letter-spacing:-0.22px">31/08/2016</div>
<div class="gc" style="left:1038px;width:90px;text-align:right;padding-right:2px;letter-spacing:-0.22px">600,00</div>
<div class="gc" style="left:1128px;width:70px;text-align:right;padding-right:2px;letter-spacing:-0.22px"></div>
<div class="gc" style="left:1198px;width:90px;text-align:right;padding-right:2px;letter-spacing:-0.22px">0,00</div>
<div class="gc" style="left:1288px;width:90px;text-align:right;padding-right:2px;letter-spacing:-0.22px">600,00</div>
<div class="gc" style="left:1378px;width:34px"><div class="a" style="left:11px;top:3px;width:11px;height:11px;border:1px solid #a8a8a8;background:#fff"></div></div>
</div>
<div class="grow" style="top:658px;left:0;width:1412px;background:#d4d0c8">
<div class="gc" style="left:0;width:28px;padding-left:0px;letter-spacing:-0.4px">AR</div>
<div class="gc" style="left:28px;width:30px;text-align:right;padding-right:2px;letter-spacing:-0.22px">434</div>
<div class="gc" style="left:58px;width:150px;padding-left:2px;letter-spacing:-0.43px">PRAZO</div>
<div class="gc" style="left:208px;width:50px;text-align:right;padding-right:2px;letter-spacing:-0.22px">4074</div>
<div class="gc" style="left:258px;width:300px;padding-left:2px;letter-spacing:-0.43px">CARLOS CUNHA</div>
<div class="gc" style="left:558px;width:200px;padding-left:2px;letter-spacing:-0.22px">Referente NF 1655</div>
<div class="gc" style="left:758px;width:90px;padding-left:2px;letter-spacing:-0.22px">1655</div>
<div class="gc" style="left:848px;width:50px;padding-left:2px;letter-spacing:-0.22px">1/1</div>
<div class="gc" style="left:898px;width:70px;padding-left:2px;letter-spacing:-0.22px">20/06/2016</div>
<div class="gc" style="left:968px;width:70px;padding-left:2px;letter-spacing:-0.22px">20/07/2016</div>
<div class="gc" style="left:1038px;width:90px;text-align:right;padding-right:2px;letter-spacing:-0.22px">800,00</div>
<div class="gc" style="left:1128px;width:70px;text-align:right;padding-right:2px;letter-spacing:-0.22px"></div>
<div class="gc" style="left:1198px;width:90px;text-align:right;padding-right:2px;letter-spacing:-0.22px">0,00</div>
<div class="gc" style="left:1288px;width:90px;text-align:right;padding-right:2px;letter-spacing:-0.22px">800,00</div>
<div class="gc" style="left:1378px;width:34px"><div class="a" style="left:11px;top:3px;width:11px;height:11px;border:1px solid #a8a8a8;background:#fff"></div></div>
</div>
<div class="grow" style="top:677px;left:0;width:1412px;background:#fff">
<div class="gc" style="left:0;width:28px;padding-left:0px;letter-spacing:-0.4px">AR</div>
<div class="gc" style="left:28px;width:30px;text-align:right;padding-right:2px;letter-spacing:-0.22px">528</div>
<div class="gc" style="left:58px;width:150px;padding-left:2px;letter-spacing:-0.43px">PRAZO</div>
<div class="gc" style="left:208px;width:50px;text-align:right;padding-right:2px;letter-spacing:-0.22px">4074</div>
<div class="gc" style="left:258px;width:300px;padding-left:2px;letter-spacing:-0.43px">CARLOS CUNHA</div>
<div class="gc" style="left:558px;width:200px;padding-left:2px;letter-spacing:-0.22px">Referente NF 1749</div>
<div class="gc" style="left:758px;width:90px;padding-left:2px;letter-spacing:-0.22px">1749</div>
<div class="gc" style="left:848px;width:50px;padding-left:2px;letter-spacing:-0.22px">1/1</div>
<div class="gc" style="left:898px;width:70px;padding-left:2px;letter-spacing:-0.22px">15/08/2016</div>
<div class="gc" style="left:968px;width:70px;padding-left:2px;letter-spacing:-0.22px">14/09/2016</div>
<div class="gc" style="left:1038px;width:90px;text-align:right;padding-right:2px;letter-spacing:-0.22px">1.500,00</div>
<div class="gc" style="left:1128px;width:70px;text-align:right;padding-right:2px;letter-spacing:-0.22px"></div>
<div class="gc" style="left:1198px;width:90px;text-align:right;padding-right:2px;letter-spacing:-0.22px">0,00</div>
<div class="gc" style="left:1288px;width:90px;text-align:right;padding-right:2px;letter-spacing:-0.22px">1.500,00</div>
<div class="gc" style="left:1378px;width:34px"><div class="a" style="left:11px;top:3px;width:11px;height:11px;border:1px solid #a8a8a8;background:#fff"></div></div>
</div>
<div class="grow" style="top:696px;left:0;width:1412px;background:#d4d0c8">
<div class="gc" style="left:0;width:28px;padding-left:0px;letter-spacing:-0.4px">AR</div>
<div class="gc" style="left:28px;width:30px;text-align:right;padding-right:2px;letter-spacing:-0.22px">535</div>
<div class="gc" style="left:58px;width:150px;padding-left:2px;letter-spacing:-0.43px">BOLETO BANCO DO BRASIL</div>
<div class="gc" style="left:208px;width:50px;text-align:right;padding-right:2px;letter-spacing:-0.22px">4074</div>
<div class="gc" style="left:258px;width:300px;padding-left:2px;letter-spacing:-0.43px">CARLOS CUNHA</div>
<div class="gc" style="left:558px;width:200px;padding-left:2px;letter-spacing:-0.22px">Referente NF 1750</div>
<div class="gc" style="left:758px;width:90px;padding-left:2px;letter-spacing:-0.22px">1750</div>
<div class="gc" style="left:848px;width:50px;padding-left:2px;letter-spacing:-0.22px">1/1</div>
<div class="gc" style="left:898px;width:70px;padding-left:2px;letter-spacing:-0.22px">16/08/2016</div>
<div class="gc" style="left:968px;width:70px;padding-left:2px;letter-spacing:-0.22px">15/09/2016</div>
<div class="gc" style="left:1038px;width:90px;text-align:right;padding-right:2px;letter-spacing:-0.22px">1.500,00</div>
<div class="gc" style="left:1128px;width:70px;text-align:right;padding-right:2px;letter-spacing:-0.22px"></div>
<div class="gc" style="left:1198px;width:90px;text-align:right;padding-right:2px;letter-spacing:-0.22px">0,00</div>
<div class="gc" style="left:1288px;width:90px;text-align:right;padding-right:2px;letter-spacing:-0.22px">1.500,00</div>
<div class="gc" style="left:1378px;width:34px"><div class="a" style="left:11px;top:3px;width:11px;height:11px;border:1px solid #a8a8a8;background:#fff"></div></div>
</div>
<div class="grow" style="top:715px;left:0;width:1412px;background:#fff">
<div class="gc" style="left:0;width:28px;padding-left:0px;letter-spacing:-0.4px">AR</div>
<div class="gc" style="left:28px;width:30px;text-align:right;padding-right:2px;letter-spacing:-0.22px">538</div>
<div class="gc" style="left:58px;width:150px;padding-left:2px;letter-spacing:-0.43px">BOLETO BANCO DO BRASIL</div>
<div class="gc" style="left:208px;width:50px;text-align:right;padding-right:2px;letter-spacing:-0.22px">4074</div>
<div class="gc" style="left:258px;width:300px;padding-left:2px;letter-spacing:-0.43px">CARLOS CUNHA</div>
<div class="gc" style="left:558px;width:200px;padding-left:2px;letter-spacing:-0.22px">Referente NF 1751</div>
<div class="gc" style="left:758px;width:90px;padding-left:2px;letter-spacing:-0.22px">1751</div>
<div class="gc" style="left:848px;width:50px;padding-left:2px;letter-spacing:-0.22px">1/1</div>
<div class="gc" style="left:898px;width:70px;padding-left:2px;letter-spacing:-0.22px">17/08/2016</div>
<div class="gc" style="left:968px;width:70px;padding-left:2px;letter-spacing:-0.22px">16/09/2016</div>
<div class="gc" style="left:1038px;width:90px;text-align:right;padding-right:2px;letter-spacing:-0.22px">1.500,00</div>
<div class="gc" style="left:1128px;width:70px;text-align:right;padding-right:2px;letter-spacing:-0.22px"></div>
<div class="gc" style="left:1198px;width:90px;text-align:right;padding-right:2px;letter-spacing:-0.22px">0,00</div>
<div class="gc" style="left:1288px;width:90px;text-align:right;padding-right:2px;letter-spacing:-0.22px">1.500,00</div>
<div class="gc" style="left:1378px;width:34px"><div class="a" style="left:11px;top:3px;width:11px;height:11px;border:1px solid #a8a8a8;background:#fff"></div></div>
</div>
<div class="grow" style="top:734px;left:0;width:1412px;background:#d4d0c8">
<div class="gc" style="left:0;width:28px;padding-left:0px;letter-spacing:-0.4px">AR</div>
<div class="gc" style="left:28px;width:30px;text-align:right;padding-right:2px;letter-spacing:-0.22px">553</div>
<div class="gc" style="left:58px;width:150px;padding-left:2px;letter-spacing:-0.43px">BOLETO BANCO DO BRASIL</div>
<div class="gc" style="left:208px;width:50px;text-align:right;padding-right:2px;letter-spacing:-0.22px">4074</div>
<div class="gc" style="left:258px;width:300px;padding-left:2px;letter-spacing:-0.43px">CARLOS CUNHA</div>
<div class="gc" style="left:558px;width:200px;padding-left:2px;letter-spacing:-0.22px">Referente NF 1753</div>
<div class="gc" style="left:758px;width:90px;padding-left:2px;letter-spacing:-0.22px">1753</div>
<div class="gc" style="left:848px;width:50px;padding-left:2px;letter-spacing:-0.22px">1/1</div>
<div class="gc" style="left:898px;width:70px;padding-left:2px;letter-spacing:-0.22px">19/08/2016</div>
<div class="gc" style="left:968px;width:70px;padding-left:2px;letter-spacing:-0.22px">17/09/2016</div>
<div class="gc" style="left:1038px;width:90px;text-align:right;padding-right:2px;letter-spacing:-0.22px">1.500,00</div>
<div class="gc" style="left:1128px;width:70px;text-align:right;padding-right:2px;letter-spacing:-0.22px"></div>
<div class="gc" style="left:1198px;width:90px;text-align:right;padding-right:2px;letter-spacing:-0.22px">0,00</div>
<div class="gc" style="left:1288px;width:90px;text-align:right;padding-right:2px;letter-spacing:-0.22px">1.500,00</div>
<div class="gc" style="left:1378px;width:34px"><div class="a" style="left:11px;top:3px;width:11px;height:11px;border:1px solid #a8a8a8;background:#fff"></div></div>
</div>
<div class="grow" style="top:753px;left:0;width:1412px;background:#fff">
<div class="gc" style="left:0;width:28px;padding-left:0px;letter-spacing:-0.4px">AR</div>
<div class="gc" style="left:28px;width:30px;text-align:right;padding-right:2px;letter-spacing:-0.22px">555</div>
<div class="gc" style="left:58px;width:150px;padding-left:2px;letter-spacing:-0.43px">BOLETO BANCO DO BRASIL</div>
<div class="gc" style="left:208px;width:50px;text-align:right;padding-right:2px;letter-spacing:-0.22px">4074</div>
<div class="gc" style="left:258px;width:300px;padding-left:2px;letter-spacing:-0.43px">CARLOS CUNHA</div>
<div class="gc" style="left:558px;width:200px;padding-left:2px;letter-spacing:-0.22px">Referente NF 1754</div>
<div class="gc" style="left:758px;width:90px;padding-left:2px;letter-spacing:-0.22px">1754</div>
<div class="gc" style="left:848px;width:50px;padding-left:2px;letter-spacing:-0.22px">1/1</div>
<div class="gc" style="left:898px;width:70px;padding-left:2px;letter-spacing:-0.22px">22/08/2016</div>
<div class="gc" style="left:968px;width:70px;padding-left:2px;letter-spacing:-0.22px">21/09/2016</div>
<div class="gc" style="left:1038px;width:90px;text-align:right;padding-right:2px;letter-spacing:-0.22px">10.000,00</div>
<div class="gc" style="left:1128px;width:70px;text-align:right;padding-right:2px;letter-spacing:-0.22px"></div>
<div class="gc" style="left:1198px;width:90px;text-align:right;padding-right:2px;letter-spacing:-0.22px">0,00</div>
<div class="gc" style="left:1288px;width:90px;text-align:right;padding-right:2px;letter-spacing:-0.22px">10.000,00</div>
<div class="gc" style="left:1378px;width:34px"><div class="a" style="left:11px;top:3px;width:11px;height:11px;border:1px solid #a8a8a8;background:#fff"></div></div>
</div>
<div class="grow" style="top:772px;left:0;width:1412px;background:#d4d0c8">
<div class="gc" style="left:0;width:28px;padding-left:0px;letter-spacing:-0.4px">AR</div>
<div class="gc" style="left:28px;width:30px;text-align:right;padding-right:2px;letter-spacing:-0.22px">556</div>
<div class="gc" style="left:58px;width:150px;padding-left:2px;letter-spacing:-0.43px">BOLETO BANCO DO BRASIL</div>
<div class="gc" style="left:208px;width:50px;text-align:right;padding-right:2px;letter-spacing:-0.22px">4074</div>
<div class="gc" style="left:258px;width:300px;padding-left:2px;letter-spacing:-0.43px">CARLOS CUNHA</div>
<div class="gc" style="left:558px;width:200px;padding-left:2px;letter-spacing:-0.22px">Referente NF 1754</div>
<div class="gc" style="left:758px;width:90px;padding-left:2px;letter-spacing:-0.22px">1754</div>
<div class="gc" style="left:848px;width:50px;padding-left:2px;letter-spacing:-0.22px">1/1</div>
<div class="gc" style="left:898px;width:70px;padding-left:2px;letter-spacing:-0.22px">22/08/2016</div>
<div class="gc" style="left:968px;width:70px;padding-left:2px;letter-spacing:-0.22px">21/09/2016</div>
<div class="gc" style="left:1038px;width:90px;text-align:right;padding-right:2px;letter-spacing:-0.22px">10.000,00</div>
<div class="gc" style="left:1128px;width:70px;text-align:right;padding-right:2px;letter-spacing:-0.22px"></div>
<div class="gc" style="left:1198px;width:90px;text-align:right;padding-right:2px;letter-spacing:-0.22px">0,00</div>
<div class="gc" style="left:1288px;width:90px;text-align:right;padding-right:2px;letter-spacing:-0.22px">10.000,00</div>
<div class="gc" style="left:1378px;width:34px"><div class="a" style="left:11px;top:3px;width:11px;height:11px;border:1px solid #a8a8a8;background:#fff"></div></div>
</div>
<div class="a" style="left:0;top:792px;width:1412px;height:27px;background:#e4e0d8;border:1px solid #b8b4ac"></div>
<div class="fbox" style="left:0;top:795px;width:26px;text-align:left;padding-left:5px;letter-spacing:-0.6px">23</div>
<div class="fbox" style="letter-spacing:-0.22px;left:1040px;top:795px;width:86px">29.085,22</div>
<div class="fbox" style="letter-spacing:-0.22px;left:1200px;top:795px;width:86px">0,00</div>
<div class="fbox" style="letter-spacing:-0.22px;left:1290px;top:795px;width:86px">29.085,22</div>
<div class="a" style="left:1419px;top:524px;width:17px;height:294px;background:#f4f4f4;background-image:repeating-conic-gradient(#fff 0 25%,#e6e6e6 0 50%);background-size:2px 2px"></div>
<div class="a" style="left:1419px;top:524px;width:17px;height:17px;border:1px solid #000;background:#fff"></div><svg class="a" style="left:1423px;top:530px" width="9" height="5" viewBox="0 0 9 5"><path d="M0 5 L4.500 0 L9 5Z" fill="#000"/></svg>
<div class="a" style="left:1419px;top:654px;width:17px;height:147px;border:1px solid #000;background:#f0f0f0"></div>
<div class="a" style="left:1419px;top:801px;width:17px;height:18px;border:1px solid #000;background:#fff"></div><svg class="a" style="left:1423px;top:808px" width="9" height="5" viewBox="0 0 9 5"><path d="M0 0 L4.500 5 L9 0Z" fill="#000"/></svg>
<div class="a" style="left:0;top:817px;width:1412px;height:1px;background:#b4b2ac"></div>
<div class="a" style="left:0;top:818px;width:1412px;height:1px;background:#969692"></div>
<div class="sb" style="left:0;top:819px;width:1437px;height:20px"></div>
<div class="sbs" style="left:-1px;top:820px;width:201px;height:18px"></div>
<div class="sbs" style="left:202px;top:820px;width:452px;height:18px"></div>
<div class="sbs" style="left:656px;top:820px;width:102px;height:18px"></div>
<div class="sbs" style="left:760px;top:820px;width:680px;height:18px"></div>
<div class="a" style="left:1437px;top:4px;width:2px;height:835px;background:#fff"></div>
<div class="t" style="left:-1px;top:822px;font-size:11px" id="st1">BaixaForm</div>
</div>
<div class="blk" style="left:0;top:0;width:1444px;height:4px"></div>
<div class="blk" style="left:1px;top:0;width:5px;height:844px"></div>
<div class="blk" style="left:1439px;top:0;width:5px;height:844px"></div>
<div class="blk" style="left:0;top:839px;width:1444px;height:5px"></div>
<div class="blk" style="left:109px;top:113px;width:1219px;height:633px"></div>
<div class="a" id="dlg" style="left:114px;top:118px;width:1209px;height:623px;background:#fff;overflow:hidden">
<div class="a" style="left:0px;top:0px;width:1209px;height:23px;background:linear-gradient(#9db6d6,#a9c1de 40%,#bdd3ea 90%,#c3d7ec);border-bottom:1px solid #9c9c9c"></div>
<div class="t seg" id="dttl" style="left:2px;top:3px;line-height:16px">Cadastro de Baixas</div>
<div class="a" style="left:0px;top:23px;width:1209px;height:23px;background:#f0f0f0"></div>
<svg class="a" style="left:5px;top:29px" width="9" height="9" viewBox="0 0 9 9"><path d="M3 0h3v3h3v3h-3v3h-3v-3h-3v-3h3z" fill="#000"/></svg>
<div class="t seg dtb" id="db0" style="left:21px;top:26px;line-height:16px"><u>I</u>nserir</div>
<svg class="a" style="left:64px;top:30px" width="11" height="6" viewBox="0 0 11 6"><path d="M0 6 L5.500 0 L11 6Z" fill="#000"/></svg>
<div class="t seg dtb" id="db1" style="left:81px;top:26px;line-height:16px"><u>E</u>ditar</div>
<div class="a" style="left:121px;top:33px;width:10px;height:3px;background:#000"></div>
<div class="t seg dtb" id="db2" style="left:138px;top:26px;line-height:16px"><u>E</u>xcluir</div>
<svg class="a" style="left:181px;top:29px" width="12" height="10" viewBox="0 0 12 10"><path d="M1 5 L4.500 8.500 L11 1.500" fill="none" stroke="#a2a2a2" stroke-width="2.300"/></svg>
<div class="t seg dtb" id="db3" style="left:199px;top:26px;line-height:16px;color:#a0a0a0"><u>S</u>alvar</div>
<svg class="a" style="left:239px;top:29px" width="11" height="10" viewBox="0 0 11 10"><path d="M1 1 L10 9 M10 1 L1 9" fill="none" stroke="#949494" stroke-width="2.100"/></svg>
<div class="t seg dtb" id="db4" style="left:257px;top:26px;line-height:16px;color:#a0a0a0"><u>C</u>ancelar</div>
<svg class="a" style="left:313px;top:28px" width="11" height="12" viewBox="0 0 11 12"><path d="M6.500 2.800 A3.600 3.600 0 1 0 9.400 8" fill="none" stroke="#000" stroke-width="2"/><path d="M6 0.500 L11 0.500 L11 5.500 L9 4.800 L8 6 L6.500 3.500Z" fill="#000"/></svg>
<div class="t seg dtb" id="db5" style="left:330px;top:26px;line-height:16px"><u>A</u>tualizar</div>
<div class="a" style="left:381px;top:23px;width:2px;height:22px;border-left:1px solid #c4c4c4;border-right:1px solid #fff"></div>
<svg class="a" style="left:392px;top:30px" width="10" height="8" viewBox="0 0 10 8"><path d="M0 0h2v8h-2z M10 0 L10 8 L3 4Z" fill="#000"/></svg>
<svg class="a" style="left:416px;top:30px" width="9" height="8" viewBox="0 0 9 8"><path d="M8 0 L8 8 L0 4Z" fill="#000"/></svg>
<svg class="a" style="left:439px;top:30px" width="9" height="8" viewBox="0 0 9 8"><path d="M0 0 L0 8 L8 4Z" fill="#000"/></svg>
<svg class="a" style="left:461px;top:30px" width="10" height="8" viewBox="0 0 10 8"><path d="M8 0h2v8h-2z M0 0 L0 8 L7 4Z" fill="#000"/></svg>
<div class="a" style="left:480px;top:23px;width:2px;height:22px;border-left:1px solid #c4c4c4;border-right:1px solid #fff"></div>
<svg class="a" style="left:487px;top:26px" width="16" height="15" viewBox="0 0 16 15"><rect x=".5" y=".5" width="15" height="14" fill="#fff" stroke="#000080"/><rect x="1" y="1" width="14" height="3" fill="#000080"/><path d="M1 7.500h14M1 10.500h14M4.500 4v10M8.500 4v10M11.500 4v10" stroke="#000080" stroke-width="1"/><path d="M2 2h1M5 2h1M8 2h1M11 2h1M13 2h1" stroke="#fff" stroke-width="1"/></svg>
<div class="a" style="left:1098px;top:23px;width:2px;height:22px;border-left:1px solid #c4c4c4;border-right:1px solid #fff"></div>
<svg class="a" style="left:1108px;top:27px" width="12" height="15" viewBox="0 0 12 15"><path d="M1.500 12 V1.500 H9" fill="none" stroke="#000" stroke-width="1.400"/><path d="M2.200 2.800 L6.900 4.600 L7.600 14.600 L2.200 11.900Z" fill="#c8c8c8"/><path d="M6.900 4.600 L8.800 3.200 L8.800 11.300 L7.600 14.600Z" fill="#8c8c8c"/><path d="M3 4 L6 5.500 M2.500 11.800 L7 14" stroke="#202020" stroke-width=".8" stroke-dasharray="1 1"/><rect x="5" y="8" width="1.200" height="1.200" fill="#a09000"/><circle cx="8.500" cy="9.800" r=".7" fill="#000"/><path d="M7 6.500 L8.500 5.500 L9 6.300 L10.800 5 L10.500 7 L8.500 8.800 L7.800 7.500Z" fill="#ff0000"/><circle cx="10.500" cy="2.500" r=".7" fill="#ff0000"/></svg>
<div class="t seg" id="fj2" style="left:1125px;top:26px;line-height:16px">Fechar a janela</div>
<div class="a bluebar" style="left:0px;top:46px;width:1209px;height:21px"></div>
<div class="t" style="left:52px;top:49px;color:#fff;font-size:11px;letter-spacing:-0.27px">Cadastrado em:</div>
<div class="t" style="left:141px;top:49px;color:#fff;font-size:11px;font-weight:bold;width:79px;overflow:hidden">08/09/2016 14:39:51</div>
<div class="t" style="left:231px;top:49px;color:#fff;font-size:11px;letter-spacing:-0.2px">Por</div>
<div class="t" style="left:256px;top:49px;color:#fff;font-size:11px;font-weight:bold;letter-spacing:-0.1px">CARLOS</div>
<div class="t" style="left:460px;top:49px;color:#fff;font-size:11px;letter-spacing:-0.27px">Atualizado em:</div>
<div class="t" style="left:544px;top:49px;color:#fff;font-size:11px;font-weight:bold;width:91px;overflow:hidden">08/09/2016 14:39:51</div>
<div class="t" style="left:645px;top:49px;color:#fff;font-size:11px;letter-spacing:-0.2px">Por</div>
<div class="a" style="left:2px;top:77px;width:1202px;height:89px;border:1px solid #3c96f0;background:#fff"></div>
<div class="lbl"  style="left:-118px;top:85px;width:200px;letter-spacing:-0.25px">Tipo</div>
<div class="lbl"  style="left:-120px;top:103.5px;width:200px;letter-spacing:-0.25px">Código</div>
<div class="lbl"  style="left:-123px;top:122px;width:200px;letter-spacing:-0.25px">Documento</div>
<div class="lbl"  style="left:-118px;top:141px;width:200px;letter-spacing:-0.25px">Parcela</div>
<div class="t vb" style="left:96px;top:84.5px;letter-spacing:0.1px">Contas a receber</div>
<div class="t vb" style="left:96px;top:104px;letter-spacing:0.1px">509</div>
<div class="t vb" style="left:96px;top:123px;letter-spacing:0.1px">999</div>
<div class="t vb" style="left:96px;top:142px;letter-spacing:0.1px">2</div>
<div class="t" style="left:286px;top:103.5px;font-size:11px;letter-spacing:-0.25px">Pessoa</div>
<div class="t" style="left:286px;top:122px;font-size:11px;letter-spacing:-0.25px">Valor</div>
<div class="t" style="left:286px;top:141px;font-size:11px;letter-spacing:-0.25px">Saldo</div>
<div class="t vb" style="left:336px;top:104px;letter-spacing:0.03px">4074 - CARLOS CUNHA - 000.000.000-00 - ESTEIO/RS</div>
<div class="t vb" style="left:336px;top:123px;letter-spacing:0.1px">R$ 170,00</div>
<div class="t vb" style="left:336px;top:142px;letter-spacing:0.1px">R$ 0,00</div>
<div class="lbl" id="fl0" style="left:1px;top:175px;width:200px;letter-spacing:0.18px;font-weight:bold">Data de pagamento</div>
<div class="lbl" id="fl1" style="left:1px;top:195px;width:200px;letter-spacing:0.18px;font-weight:bold">Conta</div>
<div class="lbl" id="fl2" style="left:1px;top:215px;width:200px;letter-spacing:0.18px;font-weight:bold">Valor</div>
<div class="lbl" id="fl3" style="left:1px;top:235px;width:200px;letter-spacing:-0.2px">Juros</div>
<div class="lbl" id="fl4" style="left:1px;top:255px;width:200px;letter-spacing:-0.2px">multa</div>
<div class="lbl" id="fl5" style="left:1px;top:275px;width:200px;letter-spacing:-0.2px">Desconto</div>
<div class="lbl" id="fl6" style="left:1px;top:295px;width:200px;letter-spacing:-0.2px">Documento</div>
<div class="lbl" id="fl7" style="left:1px;top:315px;width:200px;letter-spacing:-0.2px">Complemento</div>
<div class="lbl" id="fl8" style="left:1px;top:335px;width:200px;letter-spacing:-0.2px">Observação</div>
<div class="fld" style="left:219px;top:173px;width:88px"><span style="position:absolute;left:2px;top:0;letter-spacing:0.5px">08/09/2016</span><svg class="a" style="left:75px;top:7px" width="9" height="5" viewBox="0 0 9 5"><path d="M0 0 L9 0 L4.500 5Z" fill="#9a9a9a"/></svg></div>
<div class="fld" style="left:219px;top:193px;width:88px"><span style="position:absolute;right:19px;top:0">13</span><svg class="a" style="left:72px;top:8px" width="10" height="2" viewBox="0 0 10 2"><path d="M0 0h2v2h-2zM4 0h2v2h-2zM8 0h2v2h-2z" fill="#8c8c8c"/></svg></div>
<div class="fld" style="left:219px;top:213px;width:88px"><span style="position:absolute;right:1px;top:0">170,00</span></div>
<div class="fld" style="left:219px;top:233px;width:88px"><span style="position:absolute;right:1px;top:0">0,00</span></div>
<div class="fld" style="left:219px;top:253px;width:88px"><span style="position:absolute;right:1px;top:0">0,00</span></div>
<div class="fld" style="left:219px;top:273px;width:88px"><span style="position:absolute;right:1px;top:0">0,00</span></div>
<div class="fld" style="left:219px;top:293px;width:88px"><span style="position:absolute;left:2px;top:0">999</span></div>
<div class="fld" style="left:219px;top:313px;width:398px"></div>
<div class="fld" style="left:219px;top:333px;width:398px;height:67px;border-bottom:none"></div>
<div class="t vb" style="left:331px;top:196px;letter-spacing:-0.17px">CAIXA ECONOMICO FEDERAL</div>
<div class="a" style="left:1192px;top:170px;width:16px;height:230px;background:#f0f0f0"></div>
<svg class="a" style="left:1196px;top:176px" width="8" height="5" viewBox="0 0 8 5"><path d="M0 5 L4 0 L8 5Z" fill="#505050"/></svg>
<svg class="a" style="left:1196px;top:389px" width="8" height="5" viewBox="0 0 8 5"><path d="M0 0 L4 5 L8 0Z" fill="#505050"/></svg>
<div class="a" style="left:1192px;top:188px;width:16px;height:180px;border:1px solid #979797;border-radius:2px;background:linear-gradient(90deg,#f4f4f4,#e4e4e4 45%,#cfcfcf 55%,#dadada)"></div>
<div class="a" style="left:1196px;top:274px;width:8px;height:8px;background:repeating-linear-gradient(#606060 0 1px,#f8f8f8 1px 2px)"></div>
<div class="a" style="left:46px;top:422px;width:1162px;height:1px;background:#000"></div>
<div class="a" style="left:0px;top:422px;width:4px;height:1px;background:#000"></div>
<div class="a" style="left:0px;top:423px;width:1208px;height:1px;background:#e4e4e4"></div>
<div class="a" style="left:3px;top:402px;width:44px;height:21px;border:1px solid #000;border-bottom:none;background:#f0f0f0"></div>
<div class="a" style="left:5px;top:405px;width:40px;height:17px;border:1px dotted #000"></div>
<div class="t" style="left:8px;top:406px;font-size:11px;letter-spacing:-0.1px">Baixas</div>
<div class="t" style="left:51px;top:406px;font-size:11px;letter-spacing:0.03px">Centros de custos</div>
<div class="a" style="left:0px;top:426px;width:1207px;height:20px;background:#c0c0c0;border-top:1px solid #000">
<div class="gh" id="dh0" style="left:0px;top:-1px;width:69px;height:20px;">Cod</div>
<div class="gh" id="dh1" style="left:69px;top:-1px;width:123px;height:20px;">Data</div>
<div class="gh" id="dh2" style="left:192px;top:-1px;width:71px;height:20px;">Parcela</div>
<div class="gh" id="dh3" style="left:263px;top:-1px;width:70px;height:20px;">Valor</div>
<div class="gh" id="dh4" style="left:333px;top:-1px;width:70px;height:20px;">Multa</div>
<div class="gh" id="dh5" style="left:403px;top:-1px;width:70px;height:20px;">Juros</div>
<div class="gh" id="dh6" style="left:473px;top:-1px;width:70px;height:20px;">Desconto</div>
<div class="gh" id="dh7" style="left:543px;top:-1px;width:664px;height:20px;">Complemento</div>
</div>
<div class="a" style="left:0px;top:446px;width:1207px;height:19px;background:#c0c0c0">
<div class="gc" style="left:0px;width:69px;background:#d4d0c8;text-align:right;padding-right:2px;letter-spacing:-0.2px">193</div>
<div class="gc" style="left:69px;width:123px;padding-left:2px;letter-spacing:-0.2px">08/09/2016</div>
<div class="gc" style="left:192px;width:71px;text-align:right;padding-right:2px;letter-spacing:-0.2px">2</div>
<div class="gc" style="left:263px;width:70px;text-align:right;padding-right:2px;letter-spacing:-0.2px">170,00</div>
<div class="gc" style="left:333px;width:70px;text-align:right;padding-right:2px;letter-spacing:-0.2px">0,00</div>
<div class="gc" style="left:403px;width:70px;text-align:right;padding-right:2px;letter-spacing:-0.2px">0,00</div>
<div class="gc" style="left:473px;width:70px;text-align:right;padding-right:2px;letter-spacing:-0.2px">0,00</div>
<div class="gc" style="left:543px;width:664px;padding-left:2px;letter-spacing:-0.2px"></div>
</div>
<div class="a" style="left:1207px;top:465px;width:1px;height:136px;background:#a8a8a8"></div>
<div class="a" style="left:1208px;top:23px;width:1px;height:579px;background:#c8daf0"></div>
<div class="a" style="left:0px;top:601px;width:1209px;height:1px;background:#a4a4a4"></div>
<div class="sb" style="left:0px;top:602px;width:1209px;height:21px"></div>
<div class="sbs" style="left:-1px;top:603px;width:202px;height:18px"></div>
<div class="sbs" style="left:203px;top:603px;width:452px;height:18px"></div>
<div class="sbs" style="left:657px;top:603px;width:102px;height:18px"></div>
<div class="sbs" style="left:761px;top:603px;width:449px;height:18px"></div>
<div class="t" style="left:2px;top:605px;font-size:11px;letter-spacing:-0.27px">BaixaRegForm</div>
<div class="t" style="left:764px;top:605px;font-size:11px;letter-spacing:-0.1px">tbl_contas_areceber_baixas</div>
</div>
</body></html>
